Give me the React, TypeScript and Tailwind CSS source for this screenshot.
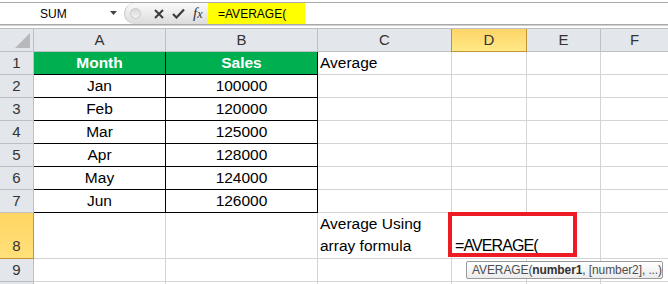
import { Fragment } from 'react';

const rows = [
  { month: 'Jan', sales: '100000' },
  { month: 'Feb', sales: '120000' },
  { month: 'Mar', sales: '125000' },
  { month: 'Apr', sales: '128000' },
  { month: 'May', sales: '124000' },
  { month: 'Jun', sales: '126000' },
];

const grid = 'border-r border-b border-[#d4d4d4]';
const boxed = 'border-r border-b border-black';

function RowHead({ n, active }: { n?: number; active?: boolean }) {
  return (
    <div
      className={`w-[34px] shrink-0 flex justify-center border-r border-b text-[15px] text-[#333] ${
        active
          ? 'items-end pb-[1px] bg-gradient-to-b from-[#ffd563] to-[#ffe07a] border-[#c49338]'
          : 'items-center bg-[#e3e6ea] border-[#bcc0c6]'
      }`}
    >
      {n}
    </div>
  );
}

function FormulaBar() {
  return (
    <div className="h-[28px] bg-white">
      <div className="h-[2px]" />
      <div className="flex h-[23px] border-t border-b border-[#a9a9a9]">
        <div className="w-[124px] flex items-center relative">
          <span className="ml-[40px] text-[12px] text-black">SUM</span>
          <svg className="absolute left-[110px] top-[8px]" width="7" height="4" viewBox="0 0 7 4">
            <path d="M0 0 H7 L3.5 4 Z" fill="#444" />
          </svg>
        </div>
        <div className="w-[84px] flex items-center rounded-l-full bg-gradient-to-b from-[#fafafa] to-[#dcdcdc] border-l border-[#c4c4c4]">
          <div className="ml-[5px] w-[11px] h-[11px] rounded-full bg-gradient-to-b from-[#d8d8d8] to-[#f2f2f2] border border-[#c8c8c8]" />
          <svg className="ml-[13px]" width="10" height="10" viewBox="0 0 10 10">
            <path d="M1 1 L9 9 M9 1 L1 9" stroke="#3c3c3c" strokeWidth="2" />
          </svg>
          <svg className="ml-[8px]" width="13" height="11" viewBox="0 0 13 11">
            <path d="M1 6 L4.5 9.5 L12 1.5" stroke="#3c3c3c" strokeWidth="2.2" fill="none" />
          </svg>
          <span className="ml-[8px] italic text-[15px] text-[#333] leading-none" style={{ fontFamily: '"Liberation Serif", serif' }}>
            f<span className="text-[12px]">x</span>
          </span>
        </div>
        <div className="w-[97px] bg-[#ffff00] flex items-center pl-[10px] text-[12px] text-black">=AVERAGE(</div>
        <div className="flex-1" />
      </div>
      <div className="h-[1px] bg-[#cfcfcf]" />
    </div>
  );
}

export default function App() {
  return (
    <div
      className="relative w-[668px] h-[284px] overflow-hidden bg-white"
      style={{ fontFamily: '"Liberation Sans", Arial, sans-serif' }}
    >
      <FormulaBar />

      {/* column headers */}
      <div className="flex h-[24px] border-t border-[#bcc0c6] bg-[#e3e6ea] text-[15px] text-[#333]">
        <div className="w-[34px] shrink-0 relative border-r border-b border-[#bcc0c6]">
          <svg className="absolute left-[15px] top-[4px]" width="15" height="15" viewBox="0 0 15 15">
            <path d="M15 0 V15 H0 Z" fill="#b6b8bb" />
          </svg>
        </div>
        <div className="w-[132px] shrink-0 flex items-center justify-center border-r border-b border-[#bcc0c6]">A</div>
        <div className="w-[152px] shrink-0 flex items-center justify-center border-r border-b border-[#bcc0c6]">B</div>
        <div className="w-[134px] shrink-0 flex items-center justify-center border-r border-b border-[#bcc0c6]">C</div>
        <div className="w-[76px] -ml-[1px] shrink-0 flex items-center justify-center border-r border-b border-l border-[#c49338] bg-gradient-to-b from-[#fdd467] to-[#ffe986]">D</div>
        <div className="w-[74px] shrink-0 flex items-center justify-center border-r border-b border-[#bcc0c6]">E</div>
        <div className="flex-1 flex items-center justify-center border-b border-[#bcc0c6]">F</div>
      </div>

      {/* row 1 */}
      <div className="flex h-[23px] text-[15.5px]">
        <RowHead n={1} />
        <div className={`w-[132px] shrink-0 flex items-center justify-center bg-[#00b050] text-white font-bold ${boxed}`}>Month</div>
        <div className={`w-[152px] shrink-0 flex items-center justify-center bg-[#00b050] text-white font-bold ${boxed}`}>Sales</div>
        <div className={`w-[134px] shrink-0 flex items-center pl-[2px] text-black ${grid}`}>Average</div>
        <div className={`w-[75px] shrink-0 ${grid}`} />
        <div className={`w-[74px] shrink-0 ${grid}`} />
        <div className="flex-1 border-b border-[#d4d4d4]" />
      </div>

      {rows.map((r, i) => (
        <Fragment key={r.month}>
          <div className="flex h-[23px] text-[15.5px] text-black">
            <RowHead n={i + 2} />
            <div className={`w-[132px] shrink-0 flex items-center justify-center ${boxed}`}>{r.month}</div>
            <div className={`w-[152px] shrink-0 flex items-center justify-center ${boxed}`}>{r.sales}</div>
            <div className={`w-[134px] shrink-0 ${grid}`} />
            <div className={`w-[75px] shrink-0 ${grid}`} />
            <div className={`w-[74px] shrink-0 ${grid}`} />
            <div className="flex-1 border-b border-[#d4d4d4]" />
          </div>
        </Fragment>
      ))}

      {/* row 8 */}
      <div className="flex h-[46px] text-[15.5px] text-black">
        <RowHead n={8} active />
        <div className={`w-[132px] shrink-0 ${grid}`} />
        <div className={`w-[152px] shrink-0 ${grid}`} />
        <div className={`w-[134px] shrink-0 flex flex-col justify-end pl-[2px] pb-[1px] leading-[22px] ${grid}`}>
          <span>Average Using</span>
          <span>array formula</span>
        </div>
        <div className="w-[75px] shrink-0 border-b border-[#d4d4d4] flex items-end pl-[3px] pb-[1px] leading-[22px] whitespace-nowrap">
          <span className="text-[16px] tracking-[-0.9px]">=AVERAGE(</span>
          <span className="inline-block w-[1px] h-[16px] bg-black mb-[3px] ml-[1px]" />
        </div>
        <div className={`w-[74px] shrink-0 ${grid}`} />
        <div className="flex-1 border-b border-[#d4d4d4]" />
      </div>

      {/* rows 9, 10 */}
      {[9, 10].map((n) => (
        <div key={n} className="flex h-[23px]">
          <RowHead n={n === 9 ? 9 : undefined} />
          <div className={`w-[132px] shrink-0 ${grid}`} />
          <div className={`w-[152px] shrink-0 ${grid}`} />
          <div className={`w-[134px] shrink-0 ${grid}`} />
          <div className={`w-[75px] shrink-0 ${grid}`} />
          <div className={`w-[74px] shrink-0 ${grid}`} />
          <div className="flex-1 border-b border-[#d4d4d4]" />
        </div>
      ))}

      {/* highlight box */}
      <div className="absolute left-[448px] top-[212px] w-[129px] h-[45px] border-[4px] border-[#ed1c24]" />

      {/* function tooltip */}
      <div className="absolute left-[466px] top-[261px] w-[197px] h-[18px] rounded-[2px] border border-[#9a9a9a] bg-gradient-to-b from-white to-[#ececec] flex items-center pl-[5px] text-[12px] tracking-[-0.1px] text-[#4d4d4d] whitespace-nowrap">
        AVERAGE(<b className="text-[#333]">number1</b>, [number2], ...)
      </div>
    </div>
  );
}
